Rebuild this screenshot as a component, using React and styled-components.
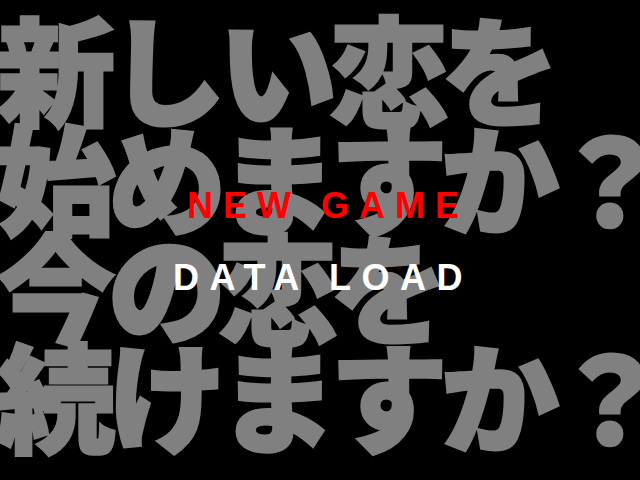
import styled, { createGlobalStyle } from "styled-components";

const GlobalStyle = createGlobalStyle`
  html, body {
    margin: 0;
    padding: 0;
    background-color: #000000;
  }
`;

const Screen = styled.div`
  position: relative;
  width: 640px;
  height: 480px;
  overflow: hidden;
  background-color: #000000;
`;

const Backdrop = styled.div`
  display: flex;
  flex-direction: column;
  padding-top: 11px;
  margin-left: -3px;
`;

const BigLine = styled.div`
  font-family: "Noto Sans CJK JP", "Noto Sans CJK SC", sans-serif;
  font-weight: 900;
  font-size: 118px;
  line-height: 109px;
  letter-spacing: -7px;
  color: #808080;
  -webkit-text-stroke: 3px #808080;
  white-space: nowrap;
`;

const Menu = styled.div`
  position: absolute;
  top: 188px;
  left: 0;
  right: 0;
  display: flex;
  flex-direction: column;
  align-items: center;
  gap: 36px;
`;

const MenuItem = styled.div`
  font-family: "Liberation Sans", Arial, sans-serif;
  font-weight: bold;
  font-size: 36px;
  line-height: 36px;
  letter-spacing: ${(props) => props.$spacing}px;
  color: ${(props) => (props.$active ? "#ff0000" : "#ffffff")};
  padding-left: ${(props) => props.$shift || 0}px;
  white-space: nowrap;
`;

const lines = ["新しい恋を", "始めますか？", "今の恋を", "続けますか？"];

const App = () => {
  return (
    <>
      <GlobalStyle />
      <Screen>
        <Backdrop>
          {lines.map((line) => (
            <BigLine key={line}>{line}</BigLine>
          ))}
        </Backdrop>
        <Menu>
          <MenuItem $active $spacing={10} $shift={16}>
            NEW GAME
          </MenuItem>
          <MenuItem $spacing={10.5} $shift={6}>
            DATA LOAD
          </MenuItem>
        </Menu>
      </Screen>
    </>
  );
};

export default App;
